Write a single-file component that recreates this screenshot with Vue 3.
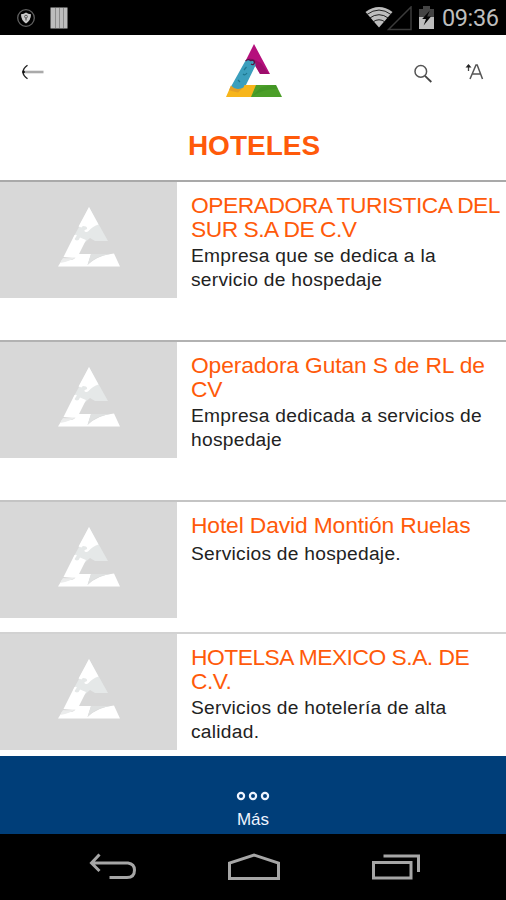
<template>
  <div class="screen">
    <!-- Android status bar -->
    <div class="status-bar">
      <svg class="shield" viewBox="0 0 20 20" width="20" height="20">
        <circle cx="10" cy="10" r="8.3" fill="none" stroke="#606060" stroke-width="1.3" />
        <path d="M5 6.3Q8 6 10 4.6Q12 6 15 6.3Q15 12.5 10 15.4Q5 12.5 5 6.3Z" fill="#c9c9c9" />
        <circle cx="10" cy="8.6" r="1.4" fill="none" stroke="#555" />
        <path d="M10 10V12.5" stroke="#555" stroke-width="1.2" />
      </svg>
      <svg class="stripes" viewBox="0 0 18 22" width="18" height="22">
        <rect x="0.5" y="0.5" width="17" height="21" fill="#bdbdbd" />
        <path d="M5.5 1V21M9.5 1V21M13.5 1V21" stroke="#8c8c8c" />
      </svg>
      <svg class="wifi" viewBox="0 0 28 21" width="28" height="21">
        <path d="M0.5 5Q14 -5 27.5 5L14 20.5Z" fill="#bebebe" />
        <path d="M1.8 7.6Q14 -1.5 26.2 7.6M4.5 11.2Q14 4.2 23.5 11.2M7.8 15Q14 10.5 20.2 15" fill="none" stroke="#222" stroke-width="1" />
      </svg>
      <svg class="signal" viewBox="0 0 26 25" width="26" height="25">
        <path d="M1.5 23.5H24V1Z" fill="none" stroke="#3b3b3b" stroke-width="1.5" />
      </svg>
      <svg class="battery" viewBox="0 0 15 23" width="15" height="23">
        <path d="M0 3H4V0H11V3H15V11H0Z" fill="#444" />
        <path d="M0 11H15V23H0Z" fill="#bdbdbd" />
        <path d="M10.8 4.5L3.2 13H7L4.6 19.5L12 10.5H8.2Z" fill="#050505" />
      </svg>
      <span class="clock">09:36</span>
    </div>

    <!-- App header -->
    <header class="app-header">
      <svg class="back" viewBox="0 0 24 16" width="24" height="16">
        <path d="M4 8H22.5" stroke="#aaa" stroke-width="2.6" />
        <path d="M6.5 1.2Q2 4.5 2 8Q2 11.5 6.5 14.8" fill="none" stroke="#222" stroke-width="1.4" />
        <circle cx="2.6" cy="8" r="1.4" fill="#111" />
      </svg>
      <svg class="logo" viewBox="0 0 56 54" width="56" height="54">
        <path d="M28 0L44 30H34L27 18L20 16Z" fill="#b5107c" />
        <path d="M22 14L27 15L35 19L43 30H34L27 18Z" fill="#8e0b62" opacity="0.6" />
        <path d="M19 17.5Q22 14.5 24.5 16.5Q30 17 29.5 21.5L19 43Q14 47.5 9 46L4.5 43.5Z" fill="#3b9fbd" />
        <path d="M19.5 17Q22 14.5 24.5 16.5Q28 15.5 28.5 18Q28 22 25 20" fill="none" stroke="#541445" stroke-width="1.4" />
        <path d="M20.5 23L18 26M17 30Q19 32 21 29M12 36L14 38" fill="none" stroke="#1f7890" stroke-width="1.2" />
        <path d="M5 41.5Q10 47.5 17.5 43.5L18.5 41H31L26 53H0Z" fill="#f7b51b" />
        <path d="M5 41.5Q10 47.5 17.5 43.5L12 48.5Q5 47 3 46Z" fill="#d8922a" opacity="0.6" />
        <path d="M30 41H50L56 53H25Z" fill="#4c9f29" />
        <path d="M25 53L35 43.5Q42 41 50 41L52 45Q38 44 25 53Z" fill="#2f821d" opacity="0.3" />
      </svg>
      <div class="tools">
        <svg viewBox="0 0 20 20" width="20" height="20">
          <circle cx="7.8" cy="7.4" r="5.8" fill="none" stroke="#555" stroke-width="1.5" />
          <path d="M12 11.8L18.3 18" stroke="#444" stroke-width="1.8" />
        </svg>
        <svg class="text-size" viewBox="0 0 19 18" width="19" height="18">
          <path d="M5 16L11 2H12.2L17.5 16M7.4 11H15.5" fill="none" stroke="#555" stroke-width="1.5" />
          <path d="M3.5 8V2.5" stroke="#444" stroke-width="1.3" />
          <path d="M0.5 4.5L3.5 1L6.5 4.5Z" fill="#222" />
        </svg>
      </div>
    </header>

    <h1 class="page-title">HOTELES</h1>

    <!-- Hotel list -->
    <main class="list">
      <article v-for="h in hotels" :key="h.name" class="row" :class="[h.kind, h.name]">
        <div class="thumb">
          <svg viewBox="0 0 62 60" width="62" height="60">
            <path d="M31 0L50 34H37L32 31L22 40L15 31L22 18Z" fill="#e5e8e8" />
            <path d="M31 0L40.5 17.5Q35 19 30 24.5Q26 26 26.5 23Q31 22 28 19.5Q24 18 23.5 20.5L20.5 19.5Z" fill="#fff" />
            <path d="M16.5 28Q20 27 18 30Q15 33 19 33.5Q21 33.5 22 30.5L28 33L21 47H33L29.5 58Q40 48 56 46.5L62 59.5H0L4 53Q15 54 17 51L5.5 50Z" fill="#fff" />
            <path d="M5 51Q12 52 18 50Q13 54 2 56Z" fill="#ebecec" />
            <path d="M29.5 58Q35 50 52 47H33Z" fill="#dfe1e1" />
          </svg>
        </div>
        <div class="info">
          <h2 class="name">
            <span v-for="line in h.title" :key="line" class="line">{{ line }}</span>
          </h2>
          <p class="desc">
            <span v-for="line in h.desc" :key="line" class="line">{{ line }}</span>
          </p>
        </div>
      </article>
    </main>

    <!-- Bottom tab -->
    <footer class="tab-bar">
      <svg viewBox="0 0 34 10" width="34" height="10">
        <g fill="none" stroke="#eef4ff" stroke-width="2.2">
          <circle cx="5" cy="5" r="3.1" />
          <circle cx="17" cy="5" r="3.1" />
          <circle cx="29" cy="5" r="3.1" />
        </g>
      </svg>
      <span class="tab-label">Más</span>
    </footer>

    <!-- Android navigation -->
    <nav class="nav-bar">
      <svg viewBox="0 0 48 28" width="48" height="28">
        <path d="M2.5 10H39Q45.5 11 45.5 17Q45.5 24.5 38 24.5H20.5M10.5 1.5L2.5 10L10.5 18" fill="none" stroke="#a6a6a6" stroke-width="3" />
      </svg>
      <svg viewBox="0 0 54 28" width="54" height="28">
        <path d="M2.5 25.5V10L27 2L51.5 10V25.5Z" fill="none" stroke="#a6a6a6" stroke-width="3" />
      </svg>
      <svg viewBox="0 0 50 28" width="50" height="28">
        <path d="M2.5 9.5H40V25H2.5ZM12.5 3H47.5V19" fill="none" stroke="#a6a6a6" stroke-width="3" />
      </svg>
    </nav>
  </div>
</template>

<script setup>
const hotels = [
  {
    name: 'turistica',
    kind: 'caps',
    title: ['OPERADORA TURISTICA DEL', 'SUR S.A DE C.V'],
    desc: ['Empresa que se dedica a la', 'servicio de hospedaje'],
  },
  {
    name: 'gutan',
    kind: 'mixed',
    title: ['Operadora Gutan S de RL de', 'CV'],
    desc: ['Empresa dedicada a servicios de', 'hospedaje'],
  },
  {
    name: 'montion',
    kind: 'single',
    title: ['Hotel David Montión Ruelas'],
    desc: ['Servicios de hospedaje.'],
  },
  {
    name: 'hotelsa',
    kind: 'caps',
    title: ['HOTELSA MEXICO S.A. DE', 'C.V.'],
    desc: ['Servicios de hotelería de alta', 'calidad.'],
  },
]
</script>

<style>
body { margin: 0; background: #fff; }
</style>

<style scoped>
.screen {
  width: 506px;
  height: 900px;
  display: flex;
  flex-direction: column;
  overflow: hidden;
  background: #fff;
  font-family: 'Liberation Sans', Arial, sans-serif;
}
svg { display: block; flex: none; }

.status-bar {
  height: 35px;
  flex: none;
  box-sizing: border-box;
  padding: 0 7px 0 16px;
  display: flex;
  align-items: center;
  background: #000;
}
.stripes { margin-left: 14px; }
.wifi { margin-left: auto; }
.signal { margin-left: -6px; margin-top: 1px; }
.battery { margin-left: 6px; }
.clock {
  width: 57px;
  margin-left: 8px;
  font-family: Roboto, sans-serif;
  font-size: 23.5px;
  line-height: 28px;
  letter-spacing: -0.4px;
  white-space: nowrap;
  color: #bdbdbd;
}

.app-header {
  height: 73px;
  flex: none;
  box-sizing: border-box;
  padding: 0 22px 2px 21px;
  display: grid;
  grid-template-columns: 1fr 56px 1fr;
  align-items: center;
}
.logo { margin-left: 1px; }
.back { margin-top: 3px; }
.tools { display: flex; justify-content: flex-end; gap: 32px; margin-top: 7px; }
.text-size { margin-top: -1px; }

.page-title {
  height: 72px;
  margin: 0;
  flex: none;
  box-sizing: border-box;
  padding: 22px 0 0 2px;
  text-align: center;
  font-size: 28px;
  line-height: 32px;
  font-weight: 700;
  color: #ff5a0a;
}

.list { height: 576px; flex: none; overflow: hidden; }
.row {
  height: 160px;
  box-sizing: border-box;
  display: flex;
  border-top: 2px solid #a9a9a9;
}
.row.gutan { border-top-color: #b2b2b2; }
.row.montion { height: 132px; border-top-color: #c4c4c4; }
.row.hotelsa { border-top-color: #d2d2d2; }
.thumb {
  width: 176.5px;
  height: 116px;
  flex: none;
  box-sizing: border-box;
  padding: 25px 0 0 58px;
  background: #d8d8d8;
}
.info { padding: 11px 0 0 14.5px; white-space: nowrap; }
.line { display: block; }
.name {
  margin: 0;
  font-size: 22.8px;
  line-height: 24px;
  font-weight: 400;
  letter-spacing: -0.12px;
  color: #ff5a0a;
}
.caps .name { letter-spacing: -0.48px; }
.desc {
  margin: 3px 0 0;
  font-size: 19.2px;
  line-height: 24px;
  letter-spacing: 0.27px;
  color: #222;
}
.single .desc { margin-top: 5px; }

.tab-bar {
  height: 78px;
  flex: none;
  box-sizing: border-box;
  padding-top: 35px;
  display: flex;
  flex-direction: column;
  align-items: center;
  background: #003e79;
}
.tab-label {
  margin-top: 9px;
  font-size: 17px;
  line-height: 19px;
  color: #eef4ff;
}

.nav-bar {
  flex: 1;
  box-sizing: border-box;
  padding: 0 85px 0 89px;
  display: flex;
  align-items: center;
  justify-content: space-between;
  background: #000;
}
</style>
